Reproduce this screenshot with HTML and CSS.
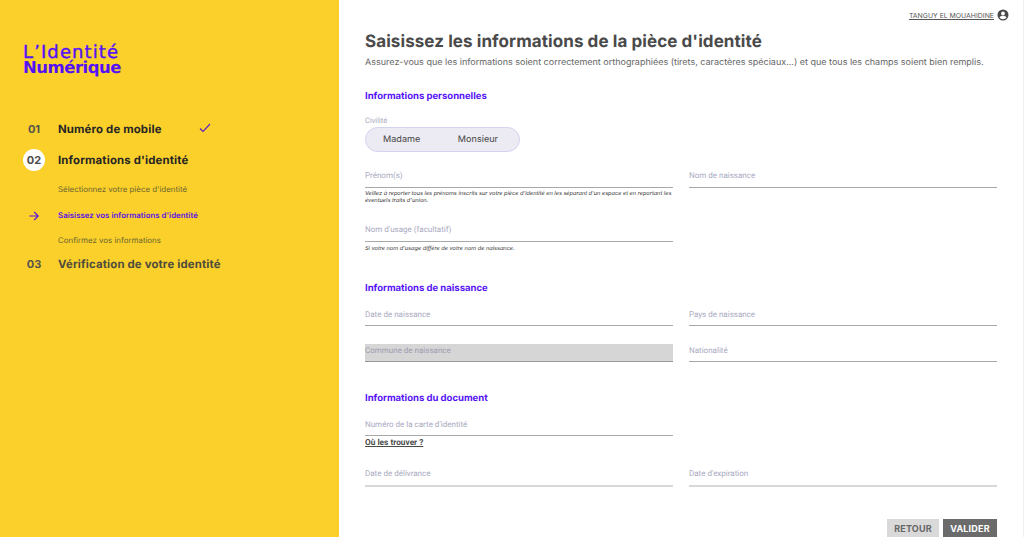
FILE: index.html
```html
<!DOCTYPE html>
<html lang="fr">
<head>
<meta charset="utf-8">
<title>L'Identité Numérique</title>
<link rel="stylesheet" href="styles.css">
</head>
<body>
<div class="page">
  <aside class="side">
    <div class="logo"><span class="logo-a">L’Identité</span><span class="logo-b">Numérique</span></div>
    <ol class="steps">
      <li class="step done">
        <span class="num">01</span><span class="step-title">Numéro de mobile</span>
        <svg class="check" width="12" height="10" viewBox="0 0 12 10"><path d="M1 5.500 4 8.500 11 1" fill="none" stroke="#5a20c8" stroke-width="1.100"/></svg>
      </li>
      <li class="step current">
        <span class="num circle">02</span><span class="step-title">Informations d'identité</span>
      </li>
      <li class="sub">Sélectionnez votre pièce d'identité</li>
      <li class="sub active">
        <svg class="arrow" width="10" height="10" viewBox="0 0 10 10"><path d="M0.500 5H9M5.200 1 9.200 5 5.200 9" fill="none" stroke="#5a14e0" stroke-width="1.100"/></svg>
        Saisissez vos informations d'identité
      </li>
      <li class="sub">Confirmez vos informations</li>
      <li class="step next">
        <span class="num">03</span><span class="step-title">Vérification de votre identité</span>
      </li>
    </ol>
  </aside>
  <main class="main">
    <div class="user">
      <span class="user-name">TANGUY EL MOUAHIDINE</span>
      <svg width="12" height="12" viewBox="0 0 24 24"><path fill="#4a4a4a" d="M12 1a11 11 0 1 0 0 22 11 11 0 0 0 0-22Zm0 4a3.800 3.800 0 1 1 0 7.600 3.800 3.800 0 0 1 0-7.600Zm0 15.500c-2.900 0-5.400-1.400-6.900-3.500 0-2.200 4.600-3.400 6.900-3.400s6.900 1.200 6.900 3.400c-1.500 2.100-4 3.500-6.900 3.500Z"/></svg>
    </div>
    <h1 class="title">Saisissez les informations de la pièce d'identité</h1>
    <p class="intro">Assurez-vous que les informations soient correctement orthographiées (tirets, caractères spéciaux...) et que tous les champs soient bien remplis.</p>

    <h2 class="section s1">Informations personnelles</h2>
    <div class="civ-label">Civilité</div>
    <div class="toggle"><span>Madame</span><span>Monsieur</span></div>

    <div class="grid g1">
      <div class="cell">
        <div class="field">Prénom(s)</div>
        <p class="help">Veillez à reporter tous les prénoms inscrits sur votre pièce d'identité en les séparant d'un espace et en reportant les éventuels traits d'union.</p>
      </div>
      <div class="cell"><div class="field">Nom de naissance</div></div>
      <div class="cell">
        <div class="field">Nom d'usage (facultatif)</div>
        <p class="help">Si votre nom d'usage diffère de votre nom de naissance.</p>
      </div>
    </div>

    <h2 class="section s2">Informations de naissance</h2>
    <div class="grid g2">
      <div class="field">Date de naissance</div>
      <div class="field">Pays de naissance</div>
      <div class="field disabled">Commune de naissance</div>
      <div class="field">Nationalité</div>
    </div>

    <h2 class="section s3">Informations du document</h2>
    <div class="grid g3">
      <div class="cell">
        <div class="field">Numéro de la carte d'identité</div>
        <a class="where">Où les trouver ?</a>
      </div>
      <div class="cell"></div>
      <div class="field light">Date de délivrance</div>
      <div class="field light">Date d'expiration</div>
    </div>

    <div class="actions">
      <button class="btn back">RETOUR</button>
      <button class="btn ok">VALIDER</button>
    </div>
  </main>
</div>
</body>
</html>
```
FILE: styles.css
```css
* { box-sizing: border-box; }
html, body { margin: 0; height: 537px; overflow: hidden; background: #fff; }
body { font-family: Inter, "Liberation Sans", sans-serif; color: #4a4a4a; text-rendering: geometricPrecision; }
.page { display: flex; height: 537px; }

.side { width: 339px; flex: none; background: #fbd02a; padding: 45px 0 0 23px; }
.logo { display: flex; flex-direction: column; color: #5512f5; font-family: "DejaVu Sans", sans-serif; }
.logo-a { font-size: 18px; font-weight: 400; line-height: 15px; letter-spacing: 1.100px; -webkit-text-stroke: 0.400px #5512f5; }
.logo-b { font-size: 16.500px; font-weight: 700; line-height: 16px; letter-spacing: -0.500px; }
.steps { list-style: none; margin: 42px 0 0; padding: 0; }
.step { display: flex; align-items: center; height: 22px; font-weight: 700; }
.step.done { margin-bottom: 9px; color: #262626; }
.step.current { color: #262626; }
.step.next { color: #4e4c3c; margin-top: -1px; }
.num { width: 35px; flex: none; font-size: 11px; text-align: center; padding-right: 13px; color: #55534a; }
.num.circle { width: 22px; height: 22px; border-radius: 50%; background: #fff; padding: 0; line-height: 22px; margin-right: 13px; color: #4a4a4a; }
.step-title { font-size: 11.400px; letter-spacing: 0.150px; }
.check { margin-left: 37px; margin-top: -2px; }
.sub { position: relative; font-size: 7.900px; font-weight: 400; color: #6a6432; padding-left: 35px; height: 25.500px; line-height: 25.500px; }
.step.current + .sub { margin-top: 6px; }
.sub.active { color: #5a14e0; font-weight: 600; }
.arrow { position: absolute; left: 6px; top: 8px; }

.main { flex: 1; padding: 9px 26px 0 26px; min-width: 0; border-right: 1px solid #f0f0f0; }
.user { display: flex; justify-content: flex-end; align-items: center; gap: 3px; height: 12px; margin-right: -12px; font-size: 6.900px; color: #555; }
.user-name { text-decoration: underline; }
.title { margin: 11px 0 0; font-size: 17px; line-height: 20px; font-weight: 700; color: #4a4a4a; letter-spacing: 0.080px; }
.intro { margin: 5px 0 0; font-size: 9px; line-height: 12px; color: #666; white-space: nowrap; }
.section { margin: 0; font-size: 9.500px; line-height: 12px; font-weight: 700; color: #5512f5; }
.s1 { margin-top: 22px; }
.s2 { margin-top: 23px; }
.s3 { margin-top: 31px; }
.civ-label { margin-top: 13px; font: 400 7.500px/10px Roboto, sans-serif; color: #a9a9c0; }
.toggle { display: flex; width: 155px; height: 25px; margin-top: 1px; align-items: center; border: 1px solid #d3d3f0; border-radius: 13px; background: #ecebf3; padding: 0 21px 0 17px; justify-content: space-between; font-size: 9.100px; color: #444; }
.grid { display: grid; grid-template-columns: 308px 308px; column-gap: 16px; }
.g1 { margin-top: 18px; }
.g2 { margin-top: 13px; row-gap: 18px; }
.g2 .field { padding-top: 1px; }
.g3 { margin-top: 14px; }
.field { height: 18px; border-bottom: 1px solid #a8a8a8; font: 400 8px/12px Roboto, sans-serif; color: #a9a9c0; }
.g3 .cell .field { height: 17px; }
.g3 > .field { margin-top: 19px; border-bottom: 2px solid #d8d8d8; height: 19px; }
.disabled { background: #d6d6d6; border-bottom-color: #999; color: #9c9cb0; }
.help { margin: 3px 0 0; font-size: 5.600px; line-height: 7px; font-style: italic; color: #333; height: 33px; }
.g1 .cell:nth-child(3) .help { height: 14px; margin-top: 4px; }
.where { display: block; margin-top: 1px; font: 700 8.300px/12px Roboto, sans-serif; color: #4a4a4a; text-decoration: underline; }
.actions { display: flex; justify-content: flex-end; gap: 4px; margin-top: 32px; }
.btn { height: 20px; border: none; padding: 0; font: 700 9px/18px Inter, sans-serif; letter-spacing: 0.200px; }
.back { width: 52px; background: #d9d9d9; color: #666; }
.ok { width: 54px; background: #6b6b6b; color: #fff; }
```
